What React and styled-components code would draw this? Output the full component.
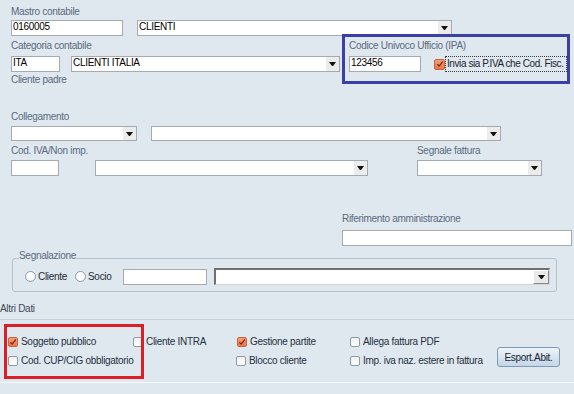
import React from "react";
import styled, { createGlobalStyle, css } from "styled-components";

const Global = createGlobalStyle`
  html, body { margin: 0; padding: 0; }
  body {
    background: #dfe7ef;
    font-family: "Liberation Sans", Arial, sans-serif;
    font-size: 10px;
    letter-spacing: -0.3px;
    color: #1d2630;
  }
  * { box-sizing: border-box; }
`;

const Page = styled.div`
  width: 574px;
  height: 394px;
  overflow: hidden;
  display: flex;
  flex-direction: column;
`;

const Section = styled.div`
  padding-left: ${(p) => p.$pl ?? 11}px;
  margin-top: ${(p) => p.$mt ?? 0}px;
`;

const Label = styled.div`
  height: 12px;
  line-height: 12px;
  color: ${(p) => (p.$dark ? "#3f4b57" : "#5a6b7d")};
  white-space: nowrap;
  margin-top: ${(p) => p.$mt ?? 0}px;
`;

const Row = styled.div`
  display: flex;
  align-items: center;
  gap: ${(p) => p.$gap ?? 0}px;
  margin-top: ${(p) => p.$mt ?? 0}px;
  margin-left: ${(p) => p.$ml ?? 0}px;
`;

const TextBox = styled.div`
  flex: none;
  width: ${(p) => p.$w}px;
  height: ${(p) => p.$h ?? 16}px;
  background: #fff;
  border: 1px solid #a6abb1;
  padding-left: 1px;
  line-height: 12px;
  color: #000;
  white-space: nowrap;
  overflow: hidden;
`;

const ComboFrame = styled.div`
  flex: none;
  width: ${(p) => p.$w}px;
  height: ${(p) => p.$h ?? 16}px;
  display: flex;
  background: #fff;
  border: 1px solid #a6abb1;
  ${(p) =>
    p.$sunken &&
    css`
      border-width: 2px 1px 1px 2px;
      border-color: #707070 #d4d4d4 #d4d4d4 #707070;
    `}
`;

const ComboText = styled.div`
  flex: 1;
  padding-left: 1px;
  line-height: 12px;
  color: #000;
  white-space: nowrap;
  overflow: hidden;
`;

const ComboButton = styled.div`
  flex: none;
  width: 13px;
  display: flex;
  align-items: center;
  justify-content: center;
  background: #ececec;
  ${(p) =>
    p.$sunken &&
    css`
      width: 16px;
      background: #e9e9e9;
      border: 1px solid;
      border-color: #ffffff #8a8a8a #8a8a8a #ffffff;
    `}
`;

const Arrow = () => (
  <svg width="7" height="4" viewBox="0 0 7 4">
    <polygon points="0,0 7,0 4,4 3,4" fill="#111" />
  </svg>
);

const Combo = ({ w, h, text, sunken }) => (
  <ComboFrame $w={w} $h={h} $sunken={sunken}>
    <ComboText>{text}</ComboText>
    <ComboButton $sunken={sunken}>
      <Arrow />
    </ComboButton>
  </ComboFrame>
);

const Box = styled.span`
  flex: none;
  display: inline-flex;
  align-items: center;
  justify-content: center;
  width: ${(p) => p.$size ?? 10}px;
  height: ${(p) => p.$size ?? 10}px;
  border-radius: 2px;
  border: 1px solid ${(p) => (p.$checked ? "#c7643e" : "#8e9aa6")};
  background: ${(p) =>
    p.$checked
      ? "linear-gradient(#f0a07a, #e6784a)"
      : "linear-gradient(#eef1f4, #ffffff)"};
`;

const CheckBox = ({ checked, size }) => (
  <Box $checked={checked} $size={size}>
    {checked && (
      <svg width="8" height="8" viewBox="0 0 8 8">
        <path d="M1.3 4.2 L3.2 6.1 L6.8 1.5" stroke="#86280f" strokeWidth="1.3" fill="none" />
      </svg>
    )}
  </Box>
);

const CheckItem = styled.div`
  display: flex;
  align-items: center;
  gap: ${(p) => p.$gap ?? 3}px;
  white-space: nowrap;
  color: #26323e;
  line-height: 12px;
  margin-left: ${(p) => p.$ml ?? 0}px;
`;

/* top area */
const SplitRow = styled.div`
  display: flex;
  margin-top: -2px;
`;

const LeftCol = styled.div`
  width: 331px;
  padding-top: 6px;
`;

const IpaBox = styled.div`
  width: 228px;
  height: 50px;
  border: 3px solid #3b40a9;
  padding: 3px 0 0 4px;
`;

const FocusLabel = styled.span`
  flex: none;
  width: 122px;
  min-width: 0;
  height: 16px;
  overflow: hidden;
  border: 1px dotted #3a3a3a;
  padding-left: 1px;
  line-height: 14px;
  letter-spacing: -0.42px;
  color: #1b232c;
  white-space: nowrap;
`;

const IvaGrid = styled.div`
  display: grid;
  grid-template-columns: 84px 322px 125px;
  grid-template-rows: 12px 16px;
  row-gap: 3px;
  margin-top: 4px;
`;

const GridCell = styled.div`
  grid-column: ${(p) => p.$col};
  grid-row: ${(p) => p.$row};
`;

/* Segnalazione */
const Group = styled.fieldset`
  margin: 4px 0 0 12px;
  width: 545px;
  padding: 0 5px 6px 0;
  border: 1px solid #b3c0ce;
  border-radius: 3px;
  min-inline-size: 0;
`;

const Legend = styled.legend`
  margin-left: 6px;
  padding: 0 0 4px 0;
  line-height: 12px;
  color: #5a6b7d;
`;

const GroupRow = styled.div`
  display: flex;
  align-items: center;
  height: 17px;
  margin-top: 2px;
  padding-left: 12px;
`;

const RadioItem = styled.div`
  flex: none;
  width: ${(p) => p.$w}px;
  display: flex;
  align-items: center;
  gap: 2px;
  color: #1f2a35;
  line-height: 12px;
`;

const RadioDot = styled.span`
  flex: none;
  width: 11px;
  height: 11px;
  border-radius: 50%;
  border: 1px solid #8f9ba7;
  background: radial-gradient(circle at 50% 40%, #ffffff 40%, #e6ebf0 100%);
`;

/* Altri dati panel */
const Panel = styled.div`
  position: relative;
  margin-top: 4px;
  height: 64px;
  border-top: 1px solid #c6d1dc;
  border-bottom: 1px solid #f6f9fb;
  padding: 12px 0 0 8px;
  display: grid;
  grid-template-columns: 125px 104px 113px 147px 63px;
  grid-template-rows: 19px 19px;
  align-items: center;
`;

const Highlight = styled.div`
  position: absolute;
  left: 4px;
  top: 4px;
  width: 140px;
  height: 55px;
  border: 3px solid #dc1f27;
  pointer-events: none;
`;

const ExportButton = styled.button`
  grid-column: 5;
  grid-row: 1 / span 2;
  align-self: end;
  margin-bottom: 3px;
  width: 63px;
  height: 20px;
  padding: 0;
  border: 1px solid #7f9ab4;
  border-radius: 3px;
  background: linear-gradient(#eef4f9, #d6e3ef 55%, #c4d6e7);
  font: inherit;
  letter-spacing: -0.3px;
  color: #1b2530;
`;

const EmptyCell = styled.span``;

export default function App() {
  return (
    <Page>
      <Global />
      <Section>
        <Label $mt={6}>Mastro contabile</Label>
        <Row $mt={2} $gap={14}>
          <TextBox $w={112}>0160005</TextBox>
          <Combo w={315} text="CLIENTI" />
        </Row>
        <SplitRow>
          <LeftCol>
            <Label>Categoria contabile</Label>
            <Row $mt={4} $gap={11}>
              <TextBox $w={49}>ITA</TextBox>
              <Combo w={269} text="CLIENTI ITALIA" />
            </Row>
            <Label $mt={2}>Cliente padre</Label>
          </LeftCol>
          <IpaBox>
            <Label>Codice Univoco Ufficio (IPA)</Label>
            <Row $mt={4}>
              <TextBox $w={72}>123456</TextBox>
              <CheckItem $ml={13} $gap={0}>
                <CheckBox checked size={11} />
                <FocusLabel>Invia sia P.IVA che Cod. Fisc.</FocusLabel>
              </CheckItem>
            </Row>
          </IpaBox>
        </SplitRow>

        <Label $mt={25}>Collegamento</Label>
        <Row $mt={3} $gap={14}>
          <Combo w={126} h={15} />
          <Combo w={350} h={15} />
        </Row>

        <IvaGrid>
          <GridCell $col={1} $row={1}>
            <Label>Cod. IVA/Non imp.</Label>
          </GridCell>
          <GridCell $col={3} $row={1}>
            <Label>Segnale fattura</Label>
          </GridCell>
          <GridCell $col={1} $row={2}>
            <TextBox $w={48} />
          </GridCell>
          <GridCell $col={2} $row={2}>
            <Combo w={273} />
          </GridCell>
          <GridCell $col={3} $row={2}>
            <Combo w={125} />
          </GridCell>
        </IvaGrid>
      </Section>

      <Section $pl={342}>
        <Label $mt={37}>Riferimento amministrazione</Label>
        <Row $mt={5}>
          <TextBox $w={230} />
        </Row>
      </Section>

      <Group>
        <Legend>Segnalazione</Legend>
        <GroupRow>
          <RadioItem $w={50}>
            <RadioDot />
            Cliente
          </RadioItem>
          <RadioItem $w={48}>
            <RadioDot />
            Socio
          </RadioItem>
          <TextBox $w={84} $h={16} />
          <Row $ml={7}>
            <Combo w={336} h={17} sunken />
          </Row>
        </GroupRow>
      </Group>

      <Section $pl={0}>
        <Label $mt={11} $dark>
          Altri Dati
        </Label>
      </Section>

      <Panel>
        <CheckItem>
          <CheckBox checked />
          Soggetto pubblico
        </CheckItem>
        <CheckItem>
          <CheckBox />
          Cliente INTRA
        </CheckItem>
        <CheckItem>
          <CheckBox checked />
          Gestione partite
        </CheckItem>
        <CheckItem>
          <CheckBox />
          Allega fattura PDF
        </CheckItem>
        <ExportButton>Esport.Abit.</ExportButton>
        <CheckItem>
          <CheckBox />
          Cod. CUP/CIG obbligatorio
        </CheckItem>
        <EmptyCell />
        <CheckItem $ml={-1}>
          <CheckBox />
          Blocco cliente
        </CheckItem>
        <CheckItem>
          <CheckBox />
          Imp. iva naz. estere in fattura
        </CheckItem>
        <Highlight />
      </Panel>
    </Page>
  );
}
